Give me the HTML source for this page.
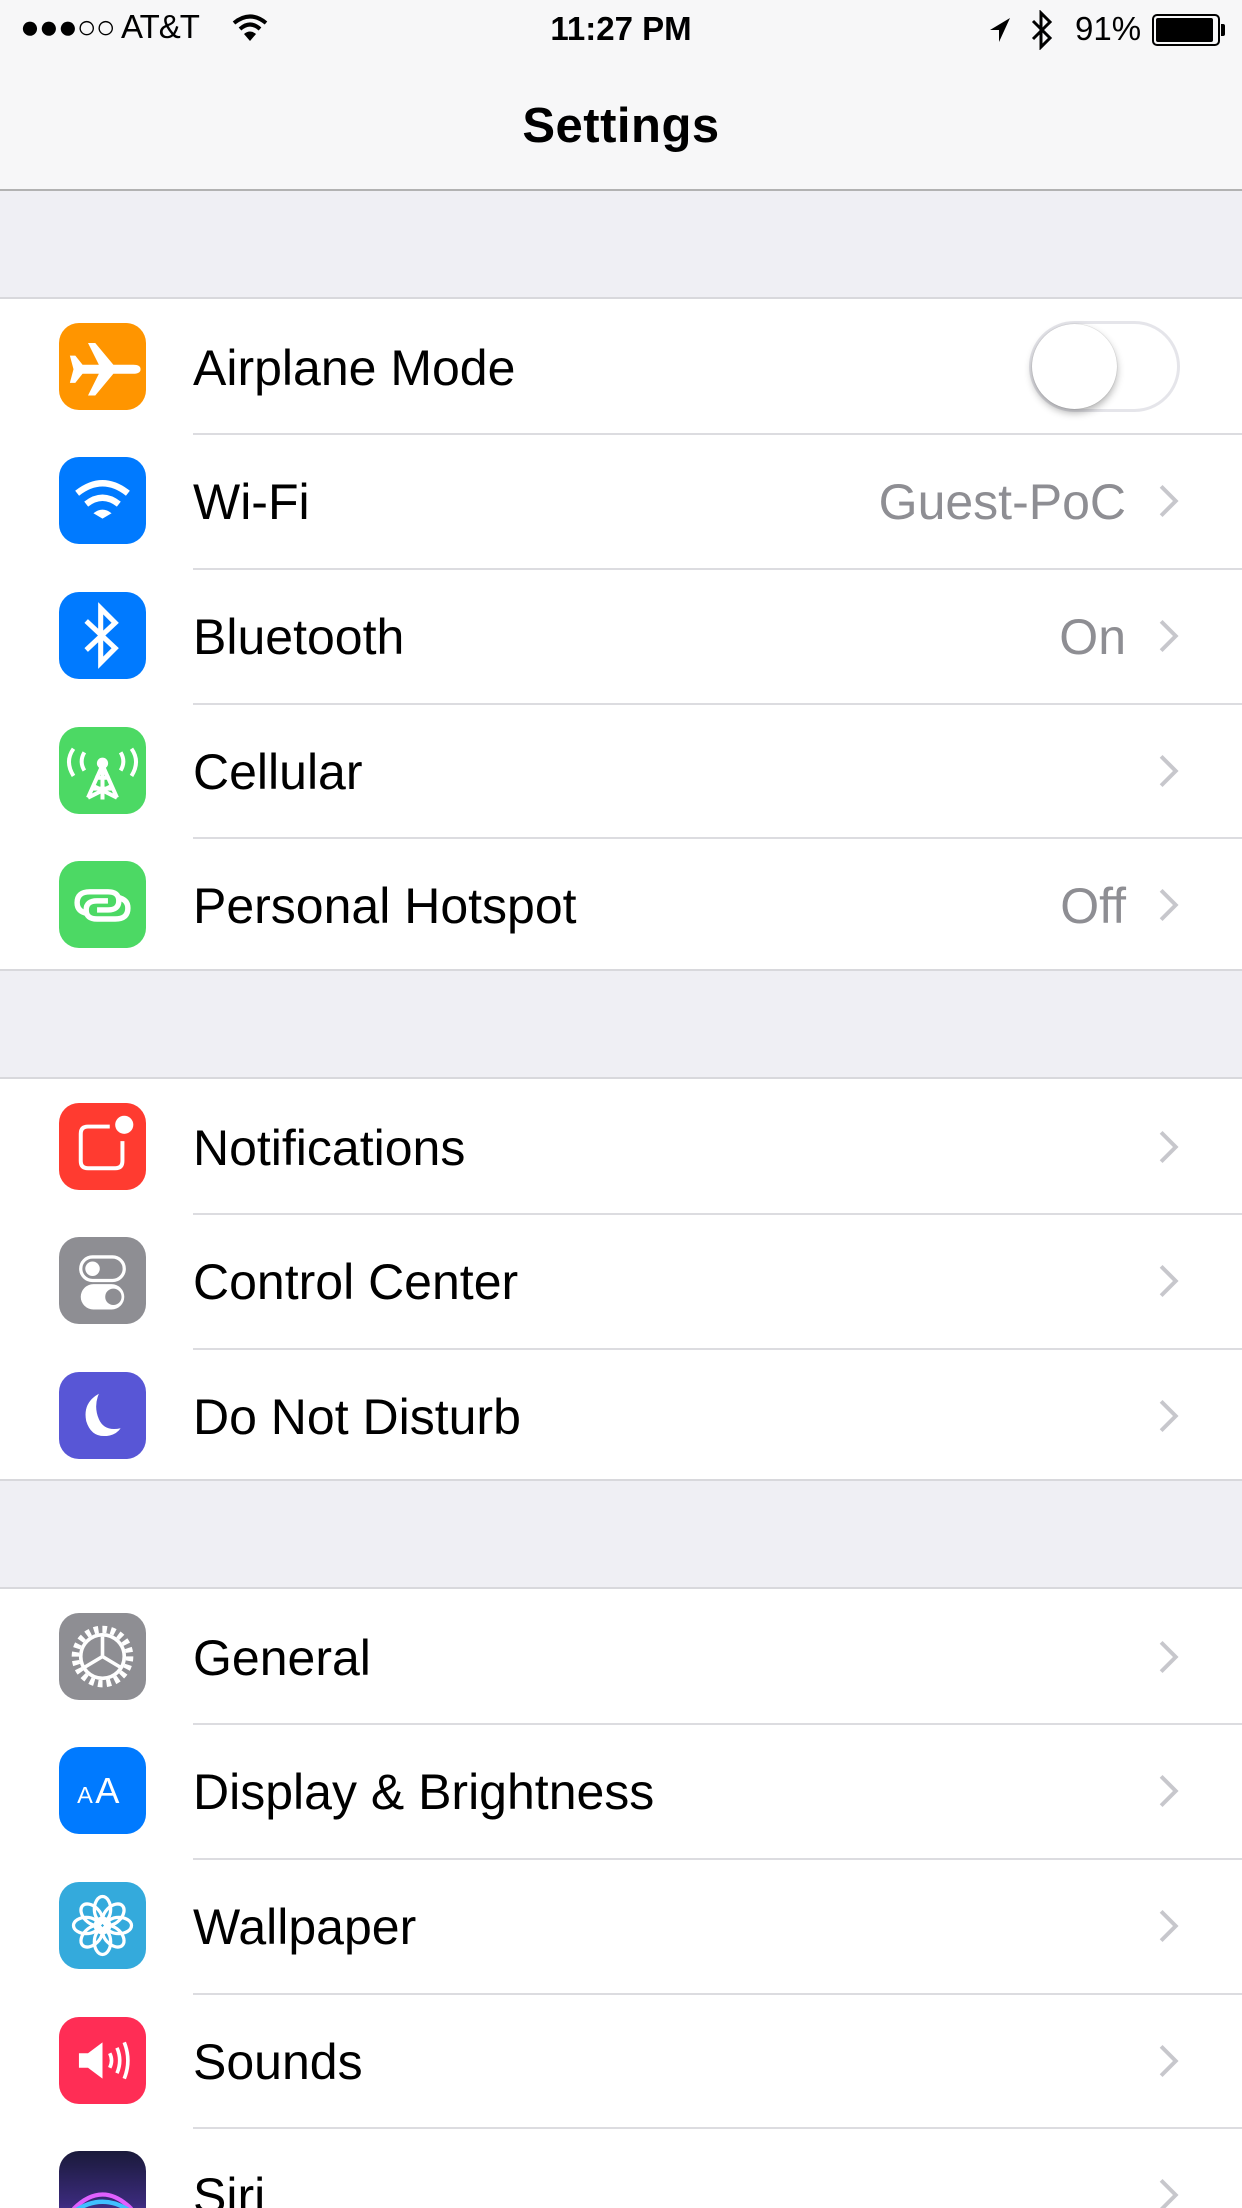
<!DOCTYPE html>
<html style="overflow:hidden;height:2208px"><head><meta charset="utf-8"><style>
*{margin:0;padding:0;box-sizing:border-box}
html,body{width:1242px;height:2208px;overflow:hidden}
body{background:#efeff4;font-family:"Liberation Sans",sans-serif;position:relative}
.hdr{position:absolute;left:0;top:0;width:1242px;height:191px;background:#f7f7f8;border-bottom:2px solid #b2b2b2}
.sb{position:absolute;top:10px;font-size:33px;color:#000}
.title{position:absolute;top:98px;width:100%;text-align:center;font-size:49px;font-weight:bold;letter-spacing:0.5px}
.grp{position:absolute;left:0;width:1242px;background:#fff;border-top:2px solid #d8d8dc;border-bottom:2px solid #d8d8dc;overflow:hidden}
.row{position:absolute;left:0;width:1242px;height:135px}
.sep{position:absolute;left:193px;right:0;top:0;height:2px;background:#dcdce0}
.ic{position:absolute;left:59px;top:24px;width:87px;height:87px;border-radius:20px;overflow:hidden}
.ic svg{width:87px;height:87px;display:block}
.lbl{position:absolute;left:193px;top:40px;font-size:50px;color:#000}
.val{position:absolute;right:116px;top:40px;font-size:50px;color:#8e8e93}
.chev{position:absolute;left:1157px;top:50px;width:24px;height:36px}
.tg{position:absolute;left:1029px;top:22px;width:151px;height:91px;border-radius:46px;border:3px solid #e5e5ea;background:#fff}
.kn{position:absolute;left:0;top:0;width:85px;height:85px;border-radius:50%;background:#fff;box-shadow:0 4px 8px rgba(0,0,0,.3),0 0 1px rgba(0,0,0,.3)}
</style></head><body>
<div class="hdr">
 <div class="sb" style="left:20px;top:8px;letter-spacing:-1px">●●●○○ AT&amp;T</div>
 <svg style="position:absolute;left:232px;top:14px" width="36" height="28" viewBox="0 0 36 28"><path d="M2 9 Q18 -4 34 9" stroke="#000" stroke-width="4" fill="none"/><path d="M8 15 Q18 6 28 15" stroke="#000" stroke-width="4" fill="none"/><path d="M12 20 L18 27 L24 20 Q18 15 12 20Z" fill="#000"/></svg>
 <div class="sb" style="left:0;width:1242px;text-align:center;font-weight:bold">11:27 PM</div>
 <svg style="position:absolute;left:988px;top:16px" width="24" height="28" viewBox="0 0 24 28"><path d="M22 2 L2 14 L11 14 L11 26Z" fill="#000"/></svg>
 <svg style="position:absolute;left:1030px;top:10px" width="24" height="40" viewBox="0 0 24 40"><path d="M3 11 L20 28 L11 37 L11 3 L20 12 L3 29" stroke="#000" stroke-width="3" fill="none"/></svg>
 <div class="sb" style="left:1075px">91%</div>
 <div style="position:absolute;left:1152px;top:14px;width:68px;height:32px;border:2px solid #000;border-radius:5px;padding:2px"><div style="width:57px;height:24px;background:#000;border-radius:2px"></div></div>
 <div style="position:absolute;left:1221px;top:24px;width:4px;height:12px;background:#000;border-radius:0 2px 2px 0"></div>
 <div class="title">Settings</div>
</div>

<div class="grp" style="top:297px;height:674px">
 <div class="row" style="top:0">
  <div class="ic" style="background:#ff9500"><svg viewBox="6 6 48 48"><path d="M12 24 L15 24 L19 29 L28 29 L22 17 L26 17 L36 29 L47 29 Q51 29 51 31.5 Q51 34 47 34 L36 34 L26 46 L22 46 L28 34 L19 34 L15 39 L12 39 L14 31.5Z" fill="#fff"/></svg></div>
  <div class="lbl">Airplane Mode</div>
  <div class="tg"><div class="kn"></div></div>
 </div>
 <div class="row" style="top:134px"><div class="sep"></div>
  <div class="ic" style="background:#007aff"><svg viewBox="6 6 48 48"><path d="M16 26 Q30 15 44 26" stroke="#fff" stroke-width="3.5" fill="none"/><path d="M21 32 Q30 25 39 32" stroke="#fff" stroke-width="3.5" fill="none"/><path d="M25 37 L30 40 L35 37 Q30 33 25 37Z" fill="#fff"/></svg></div>
  <div class="lbl">Wi-Fi</div><div class="val">Guest-PoC</div>
  <svg class="chev" viewBox="0 0 20 32"><path d="M3 3 L16 16 L3 29" stroke="#c7c7cc" stroke-width="3.5" fill="none"/></svg>
 </div>
 <div class="row" style="top:269px"><div class="sep"></div>
  <div class="ic" style="background:#007aff"><svg viewBox="6 6 48 48"><path d="M21 22 L37 37 L29 45 L29 15 L37 23 L21 38" stroke="#fff" stroke-width="2.8" fill="none"/></svg></div>
  <div class="lbl">Bluetooth</div><div class="val">On</div>
  <svg class="chev" viewBox="0 0 20 32"><path d="M3 3 L16 16 L3 29" stroke="#c7c7cc" stroke-width="3.5" fill="none"/></svg>
 </div>
 <div class="row" style="top:404px"><div class="sep"></div>
  <div class="ic" style="background:#4cd964"><svg viewBox="6 6 48 48" fill="none" stroke="#fff" stroke-width="2.2"><path d="M14 18 Q9 25 14 33"/><path d="M20 20 Q17 25 20 30"/><path d="M46 18 Q51 25 46 33"/><path d="M40 20 Q43 25 40 30"/><circle cx="30" cy="26" r="2" fill="#fff"/><path d="M30 27 L30 46 M30 27 L22 45 M30 27 L38 45 M24 40 L36 40 M26 34 L34 34 M22 45 L36 38 M38 45 L24 38"/></svg></div>
  <div class="lbl">Cellular</div>
  <svg class="chev" viewBox="0 0 20 32"><path d="M3 3 L16 16 L3 29" stroke="#c7c7cc" stroke-width="3.5" fill="none"/></svg>
 </div>
 <div class="row" style="top:538px"><div class="sep"></div>
  <div class="ic" style="background:#4cd964"><svg viewBox="6 6 48 48" fill="none" stroke="#fff" stroke-width="3"><path d="M22 35 Q16 34 16 29 Q16 23 23 23 L33 23 Q39 23 39 28 Q39 33 33 33 L27 33"/><path d="M38 26 Q44 27 44 32 Q44 38 37 38 L27 38 Q21 38 21 33 Q21 28 27 28 L33 28"/></svg></div>
  <div class="lbl">Personal Hotspot</div><div class="val">Off</div>
  <svg class="chev" viewBox="0 0 20 32"><path d="M3 3 L16 16 L3 29" stroke="#c7c7cc" stroke-width="3.5" fill="none"/></svg>
 </div>
</div>

<div class="grp" style="top:1077px;height:404px">
 <div class="row" style="top:0">
  <div class="ic" style="background:#ff3b30"><svg viewBox="6 6 48 48"><path d="M34 19 L22 19 Q18 19 18 23 L18 38 Q18 42 22 42 L37 42 Q41 42 41 38 L41 27" stroke="#fff" stroke-width="2.2" fill="none"/><circle cx="42" cy="18" r="5" fill="#fff"/></svg></div>
  <div class="lbl">Notifications</div>
  <svg class="chev" viewBox="0 0 20 32"><path d="M3 3 L16 16 L3 29" stroke="#c7c7cc" stroke-width="3.5" fill="none"/></svg>
 </div>
 <div class="row" style="top:134px"><div class="sep"></div>
  <div class="ic" style="background:#8e8e93"><svg viewBox="6 6 48 48"><rect x="18" y="17" width="24" height="13" rx="6.5" stroke="#fff" stroke-width="1.8" fill="none"/><circle cx="24.5" cy="23.5" r="4" fill="#fff"/><rect x="18" y="32" width="24" height="14" rx="7" fill="#fff"/><circle cx="36" cy="39" r="4.5" fill="#8e8e93"/></svg></div>
  <div class="lbl">Control Center</div>
  <svg class="chev" viewBox="0 0 20 32"><path d="M3 3 L16 16 L3 29" stroke="#c7c7cc" stroke-width="3.5" fill="none"/></svg>
 </div>
 <div class="row" style="top:269px"><div class="sep"></div>
  <div class="ic" style="background:#5856d6"><svg viewBox="6 6 48 48"><path d="M28 18 Q19 23 21 33 Q24 43 34 41 Q38 40 40 37 Q31 39 28 32 Q25 25 28 18Z" fill="#fff"/></svg></div>
  <div class="lbl">Do Not Disturb</div>
  <svg class="chev" viewBox="0 0 20 32"><path d="M3 3 L16 16 L3 29" stroke="#c7c7cc" stroke-width="3.5" fill="none"/></svg>
 </div>
</div>

<div class="grp" style="top:1587px;height:640px;border-bottom:none">
 <div class="row" style="top:0">
  <div class="ic" style="background:#8e8e93"><svg viewBox="6 6 48 48"><circle cx="30" cy="30" r="15" stroke="#fff" stroke-width="4" stroke-dasharray="2.5 2.2" fill="none"/><circle cx="30" cy="30" r="12" stroke="#fff" stroke-width="2" fill="none"/><path d="M30 30 L30 19 M30 30 L20 36 M30 30 L40 36" stroke="#fff" stroke-width="2"/></svg></div>
  <div class="lbl">General</div>
  <svg class="chev" viewBox="0 0 20 32"><path d="M3 3 L16 16 L3 29" stroke="#c7c7cc" stroke-width="3.5" fill="none"/></svg>
 </div>
 <div class="row" style="top:134px"><div class="sep"></div>
  <div class="ic" style="background:#007aff"><svg viewBox="6 6 48 48"><text x="16" y="37" font-family="Liberation Sans" font-size="13" fill="#fff">A</text><text x="26" y="37" font-family="Liberation Sans" font-size="20" fill="#fff">A</text></svg></div>
  <div class="lbl">Display &amp; Brightness</div>
  <svg class="chev" viewBox="0 0 20 32"><path d="M3 3 L16 16 L3 29" stroke="#c7c7cc" stroke-width="3.5" fill="none"/></svg>
 </div>
 <div class="row" style="top:269px"><div class="sep"></div>
  <div class="ic" style="background:#34aadc"><svg viewBox="6 6 48 48" fill="none" stroke="#fff" stroke-width="1.8"><circle cx="30" cy="30" r="4"/><ellipse cx="30" cy="21" rx="4.5" ry="7"/><ellipse cx="30" cy="39" rx="4.5" ry="7"/><ellipse cx="21" cy="30" rx="7" ry="4.5"/><ellipse cx="39" cy="30" rx="7" ry="4.5"/><ellipse cx="24" cy="24" rx="4.5" ry="7" transform="rotate(-45 24 24)"/><ellipse cx="36" cy="36" rx="4.5" ry="7" transform="rotate(-45 36 36)"/><ellipse cx="36" cy="24" rx="4.5" ry="7" transform="rotate(45 36 24)"/><ellipse cx="24" cy="36" rx="4.5" ry="7" transform="rotate(45 24 36)"/></svg></div>
  <div class="lbl">Wallpaper</div>
  <svg class="chev" viewBox="0 0 20 32"><path d="M3 3 L16 16 L3 29" stroke="#c7c7cc" stroke-width="3.5" fill="none"/></svg>
 </div>
 <div class="row" style="top:404px"><div class="sep"></div>
  <div class="ic" style="background:#ff2d55"><svg viewBox="6 6 48 48"><path d="M17 26 L22 26 L30 20 L30 40 L22 34 L17 34Z" fill="#fff"/><path d="M34 26 Q36 30 34 34 M38 23 Q41 30 38 37 M42 20 Q46 30 42 40" stroke="#fff" stroke-width="2" fill="none"/></svg></div>
  <div class="lbl">Sounds</div>
  <svg class="chev" viewBox="0 0 20 32"><path d="M3 3 L16 16 L3 29" stroke="#c7c7cc" stroke-width="3.5" fill="none"/></svg>
 </div>
 <div class="row" style="top:538px"><div class="sep"></div>
  <div class="ic" style="background:linear-gradient(180deg,#1a1a3a,#3a2a7a 60%,#6a4ad0)"><svg viewBox="0 0 60 60"><path d="M10 40 Q30 20 50 40" stroke="#e060ff" stroke-width="3" fill="none"/><path d="M10 42 Q30 28 50 42" stroke="#40c0ff" stroke-width="3" fill="none"/></svg></div>
  <div class="lbl">Siri</div>
  <svg class="chev" viewBox="0 0 20 32"><path d="M3 3 L16 16 L3 29" stroke="#c7c7cc" stroke-width="3.5" fill="none"/></svg>
 </div>
</div>
</body></html>
